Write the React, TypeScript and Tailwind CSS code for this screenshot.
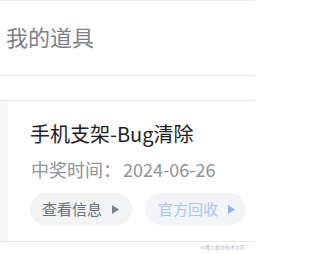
export default function App() {
  return (
    <div className="w-[254px] h-[254px] bg-white overflow-hidden font-['Noto_Sans_CJK_SC',sans-serif]">
      {/* Header */}
      <div className="border-t border-[#ececec] h-[75px] flex items-center pl-[6px]">
        <span className="text-[22px] leading-none text-[#7d8088] -mt-[4px]">我的道具</span>
      </div>
      <div className="border-t border-[#e6e6e6] h-[25px]" />

      {/* Item card */}
      <div className="border-t border-[#e6e6e6] border-b flex h-[142px]">
        <div className="w-[8px] bg-[#f6f7f9]" />
        <div className="flex-1 pl-[22px] pt-[21px] flex flex-col">
          <div className="text-[20px] leading-[24px] text-[#1f2023]">手机支架-Bug清除</div>
          <div className="mt-[11px] text-[18px] leading-[24px] text-[#8d929b] flex">
            <span className="ml-[1px]">中奖时间：</span>
            <span className="ml-[2px]">2024-06-26</span>
          </div>
          <div className="mt-[12px] flex gap-[13px]">
            <button className="h-[32px] w-[102px] rounded-full bg-[#f2f3f5] flex items-center pl-[12px] text-[15px] text-[#6c7079]">
              查看信息
              <svg width="7" height="9" viewBox="0 0 7 9" className="ml-[10px]">
                <path d="M0 0 L7 4.5 L0 9 Z" fill="#7d8088" />
              </svg>
            </button>
            <button className="h-[32px] w-[101px] rounded-full bg-[#f2f4f7] flex items-center pl-[13px] text-[15px] text-[#a9c7f3]">
              官方回收
              <svg width="7" height="9" viewBox="0 0 7 9" className="ml-[10px]">
                <path d="M0 0 L7 4.5 L0 9 Z" fill="#8fb6ee" />
              </svg>
            </button>
          </div>
        </div>
      </div>
      <div className="flex justify-end pr-[9px] pt-[2px]">
        <span className="text-[5px] leading-none text-[#b8b8b8]">@稀土掘金技术社区</span>
      </div>
    </div>
  )
}
